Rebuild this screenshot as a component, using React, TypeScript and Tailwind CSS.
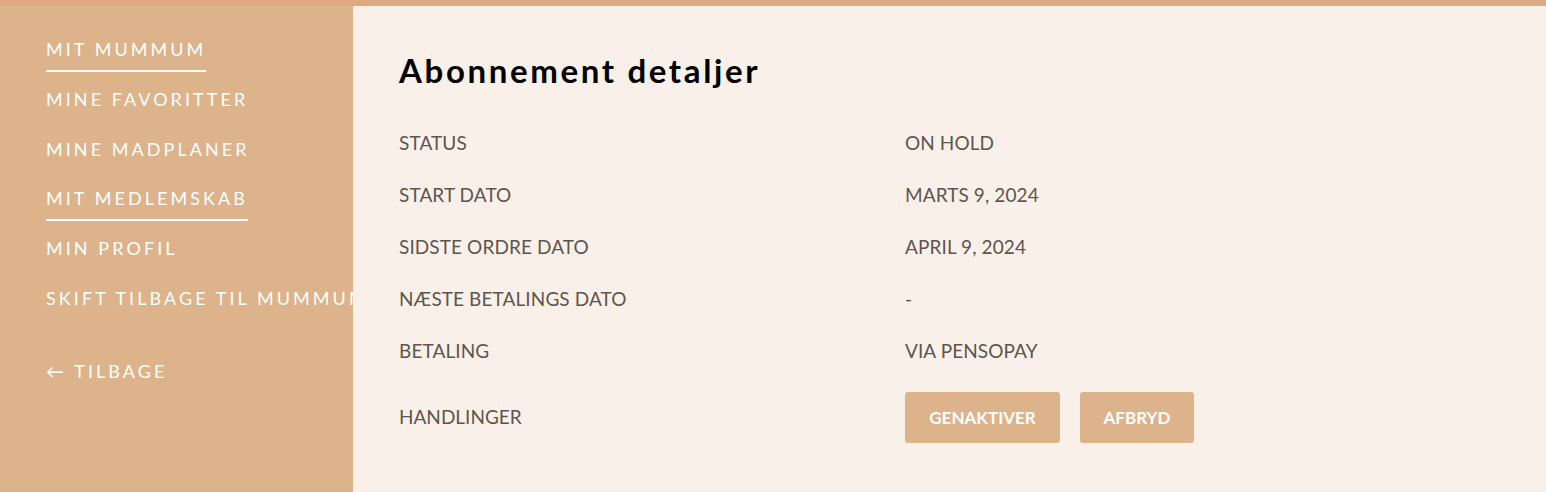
import React from "react";

const nav = [
  { label: "MIT MUMMUM", active: true },
  { label: "MINE FAVORITTER" },
  { label: "MINE MADPLANER" },
  { label: "MIT MEDLEMSKAB", active: true },
  { label: "MIN PROFIL" },
  { label: "SKIFT TILBAGE TIL MUMMUM" },
];

const rows: [string, string][] = [
  ["STATUS", "ON HOLD"],
  ["START DATO", "MARTS 9, 2024"],
  ["SIDSTE ORDRE DATO", "APRIL 9, 2024"],
  ["NÆSTE BETALINGS DATO", "-"],
  ["BETALING", "VIA PENSOPAY"],
];

export default function App() {
  return (
    <div className="w-[1546px] h-[492px] flex flex-col bg-[#f9f1e9] overflow-hidden" style={{ fontFamily: "Lato, 'Open Sans', sans-serif" }}>
      <div className="h-[6px] bg-[#e0aa80] shrink-0" />
      <div className="flex flex-1 min-h-0">
        <aside className="w-[353px] shrink-0 bg-[#dcb38a] overflow-hidden pl-[46px] pt-[32px]">
          <ul className="flex flex-col">
            {nav.map((n) => (
              <li key={n.label} className="h-[49.8px] whitespace-nowrap">
                <span className={`inline-block text-white text-[18px] leading-[22px] tracking-[0.17em] pb-[10px] ${n.active ? "border-b-2 border-white" : "border-b-2 border-transparent"}`}>
                  {n.label}
                </span>
              </li>
            ))}
          </ul>
          <div className="mt-[23px] text-white text-[18px] leading-[22px] tracking-[0.17em] whitespace-nowrap">← TILBAGE</div>
        </aside>
        <main className="flex-1 pl-[46px] pt-[44px]">
          <h1 className="text-black text-[33px] leading-[40px] font-bold tracking-[0.08em]">Abonnement detaljer</h1>
          <div className="mt-[27px] flex flex-col text-[#5e554e] text-[19px]">
            {rows.map(([k, v]) => (
              <div key={k} className="flex h-[52px] items-center">
                <div className="w-[506px] tracking-[0.005em]">{k}</div>
                <div className="tracking-[0.005em]">{v}</div>
              </div>
            ))}
            <div className="flex items-center mt-[15px]">
              <div className="w-[506px]">HANDLINGER</div>
              <div className="flex gap-[20px]">
                <button className="h-[51px] w-[155px] rounded-[3px] bg-[#dcb38a] text-white font-bold text-[17px]">GENAKTIVER</button>
                <button className="h-[51px] w-[114px] rounded-[3px] bg-[#dcb38a] text-white font-bold text-[17px]">AFBRYD</button>
              </div>
            </div>
          </div>
        </main>
      </div>
    </div>
  );
}
